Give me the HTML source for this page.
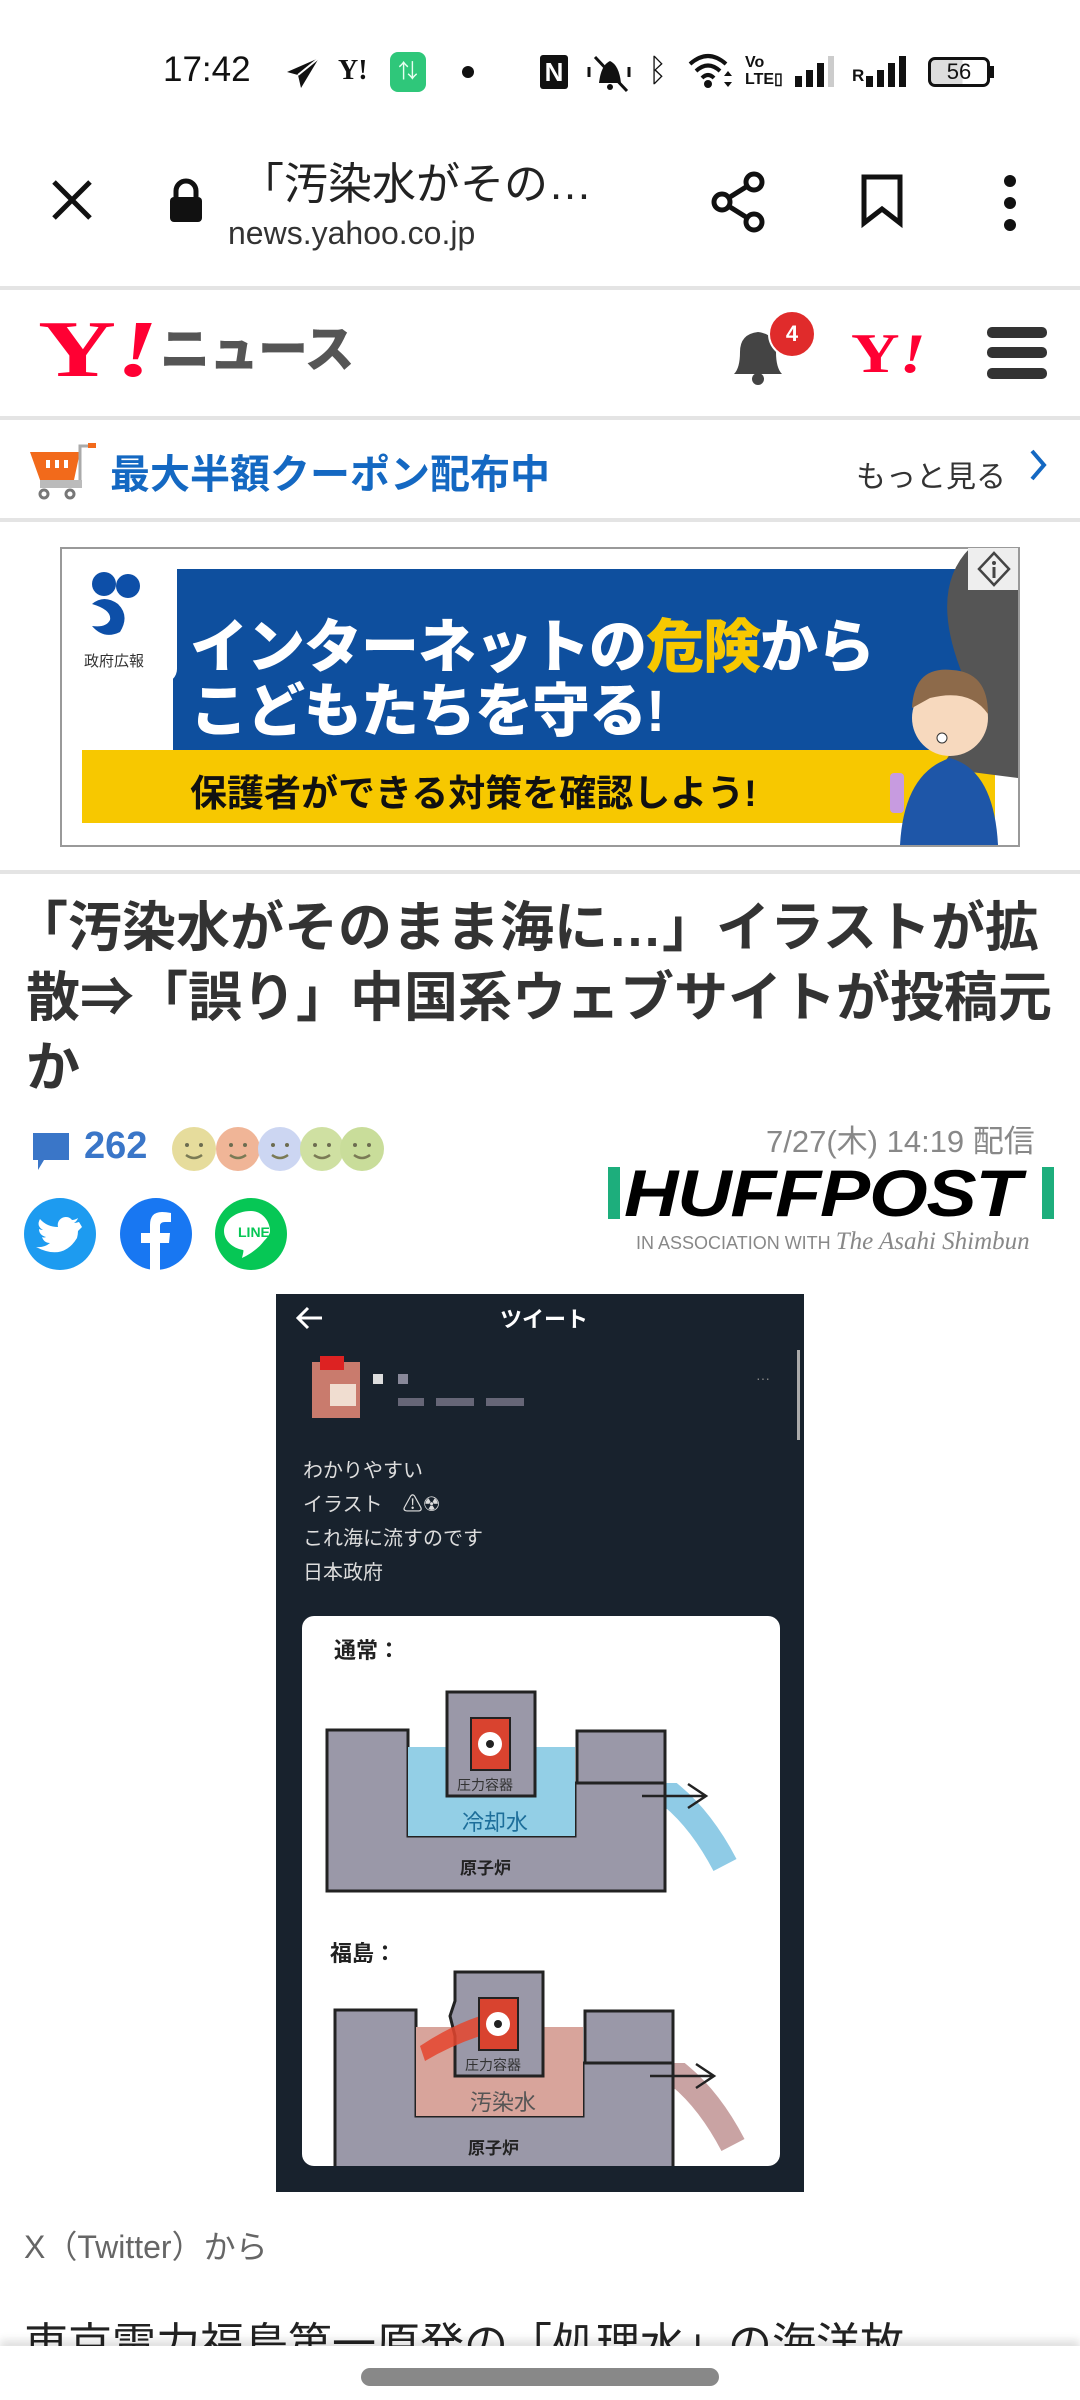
<!DOCTYPE html>
<html><head><meta charset="utf-8">
<style>
*{margin:0;padding:0;box-sizing:border-box}
body{width:1080px;height:2400px;background:#fff;position:relative;overflow:hidden;font-family:"Liberation Sans","Noto Sans CJK JP",sans-serif;color:#222}
.a{position:absolute;white-space:nowrap}
.jp{font-family:"Liberation Sans","Noto Sans CJK JP",sans-serif}
.hr{position:absolute;left:0;width:1080px;height:4px;background:#e4e4e4}
</style></head><body>

<!-- status bar -->
<div class="a" style="left:163px;top:50px;font-size:35px;color:#111">17:42</div>
<svg class="a" style="left:285px;top:56px" width="36" height="34" viewBox="0 0 36 34"><path d="M34 2 L2 16 L13 19 L16 32 Z" fill="#111"/><path d="M13 19 L34 2" stroke="#fff" stroke-width="2"/></svg>
<div class="a" style="left:338px;top:55px;font-size:28px;font-family:'Liberation Serif',serif;font-weight:bold;color:#111">Y!</div>
<div class="a" style="left:390px;top:52px;width:36px;height:40px;border-radius:8px;background:#2fc77a;color:#e8fff0;font-size:20px;text-align:center;line-height:40px">⇅</div>
<div class="a" style="left:462px;top:66px;width:12px;height:12px;border-radius:6px;background:#111"></div>
<div class="a" style="left:540px;top:55px;width:28px;height:34px;background:#111;border-radius:3px;color:#fff;font-size:26px;font-weight:bold;text-align:center;line-height:34px">N</div>
<svg class="a" style="left:585px;top:53px" width="50" height="40" viewBox="0 0 50 40"><path d="M14 30 Q16 12 25 8 Q34 12 36 30 Z" fill="#111"/><circle cx="25" cy="34" r="3" fill="#111"/><path d="M10 4 L42 38" stroke="#111" stroke-width="3"/><path d="M4 14v10M44 14v10" stroke="#111" stroke-width="3"/></svg>
<div class="a" style="left:648px;top:52px;font-size:32px;color:#111">ᛒ</div>
<svg class="a" style="left:688px;top:52px" width="46" height="38" viewBox="0 0 46 38"><path d="M2 12 Q20 -4 38 12" stroke="#111" stroke-width="4" fill="none"/><path d="M8 19 Q20 8 32 19" stroke="#111" stroke-width="4" fill="none"/><path d="M14 26 Q20 20 26 26" stroke="#111" stroke-width="4" fill="none"/><circle cx="20" cy="32" r="4" fill="#111"/><path d="M36 24l4-5 4 5zM36 30l4 5 4-5z" fill="#111"/></svg>
<div class="a" style="left:745px;top:54px;font-size:16px;line-height:17px;font-weight:bold;color:#111">Vo<br>LTE▯</div>
<svg class="a" style="left:795px;top:56px" width="44" height="32"><rect x="0" y="20" width="7" height="11" fill="#111"/><rect x="11" y="14" width="7" height="17" fill="#111"/><rect x="22" y="7" width="7" height="24" fill="#111"/><rect x="33" y="0" width="6" height="31" fill="#ccc"/></svg>
<div class="a" style="left:852px;top:66px;font-size:17px;font-weight:bold;color:#111">R</div>
<svg class="a" style="left:866px;top:56px" width="44" height="32"><rect x="0" y="20" width="7" height="11" fill="#111"/><rect x="11" y="14" width="7" height="17" fill="#111"/><rect x="22" y="7" width="7" height="24" fill="#111"/><rect x="33" y="0" width="7" height="31" fill="#111"/></svg>
<div class="a" style="left:928px;top:57px;width:62px;height:30px;border:3px solid #111;border-radius:7px;font-size:22px;text-align:center;line-height:24px;color:#111;background:linear-gradient(90deg,#ddd 56%,#fff 56%)">56</div>
<div class="a" style="left:990px;top:66px;width:4px;height:12px;background:#111"></div>

<!-- url bar -->
<svg class="a" style="left:50px;top:178px" width="44" height="44"><path d="M4 4L40 40M40 4L4 40" stroke="#111" stroke-width="5"/></svg>
<svg class="a" style="left:168px;top:178px" width="36" height="46"><path d="M8 20V13a10 10 0 0 1 20 0v7" stroke="#111" stroke-width="5" fill="none"/><rect x="2" y="19" width="32" height="25" rx="4" fill="#111"/></svg>
<div class="a jp" style="left:240px;top:148px;font-size:44px;color:#222">「汚染水がその…</div>
<div class="a" style="left:228px;top:215px;font-size:32px;color:#333">news.yahoo.co.jp</div>
<svg class="a" style="left:708px;top:170px" width="60" height="64"><path d="M46 12L14 32L46 52" stroke="#111" stroke-width="5" fill="none"/><circle cx="46" cy="12" r="8" fill="#fff" stroke="#111" stroke-width="5"/><circle cx="14" cy="32" r="8" fill="#fff" stroke="#111" stroke-width="5"/><circle cx="46" cy="52" r="8" fill="#fff" stroke="#111" stroke-width="5"/></svg>
<svg class="a" style="left:860px;top:173px" width="44" height="56"><path d="M4 4H40V50L22 36L4 50Z" stroke="#111" stroke-width="5" fill="none" stroke-linejoin="miter"/></svg>
<svg class="a" style="left:998px;top:175px" width="24" height="56"><circle cx="12" cy="6" r="6" fill="#111"/><circle cx="12" cy="28" r="6" fill="#111"/><circle cx="12" cy="50" r="6" fill="#111"/></svg>
<div class="hr" style="top:286px"></div>

<!-- yahoo header -->
<div class="a" style="left:38px;top:305px;font-size:80px;line-height:90px;font-family:'Liberation Serif',serif;font-weight:bold;color:#ff0033;transform:scaleX(1.35);transform-origin:left">Y<i>!</i></div>
<div class="a jp" style="left:160px;top:318px;font-size:50px;line-height:64px;font-weight:900;color:#555;letter-spacing:-1px">ニュース</div>
<svg class="a" style="left:728px;top:322px" width="62" height="64"><path d="M6 52Q12 46 12 30Q12 12 30 10Q48 12 48 30Q48 46 54 52Z" fill="#444"/><circle cx="30" cy="57" r="6" fill="#444"/></svg>
<div class="a" style="left:768px;top:310px;width:48px;height:48px;border-radius:24px;background:#e02b2b;color:#fff;font-size:22px;font-weight:bold;text-align:center;line-height:44px;border:2px solid #fff">4</div>
<div class="a" style="left:851px;top:322px;font-size:56px;line-height:64px;font-family:'Liberation Serif',serif;font-weight:bold;color:#ff0033;transform:scaleX(1.2);transform-origin:left">Y<i>!</i></div>
<div class="a" style="left:987px;top:327px;width:60px;height:11px;background:#333;border-radius:5px"></div>
<div class="a" style="left:987px;top:347px;width:60px;height:11px;background:#333;border-radius:5px"></div>
<div class="a" style="left:987px;top:368px;width:60px;height:11px;background:#333;border-radius:5px"></div>
<div class="hr" style="top:416px"></div>

<!-- coupon -->
<svg class="a" style="left:28px;top:440px" width="70" height="62"><path d="M2 12H52L46 40H12Z" fill="#f26a1b"/><rect x="18" y="20" width="4" height="8" fill="#fff"/><rect x="27" y="20" width="4" height="8" fill="#fff"/><rect x="36" y="20" width="4" height="8" fill="#fff"/><path d="M52 40V6H66" stroke="#aaa" stroke-width="3" fill="none"/><rect x="60" y="3" width="8" height="5" fill="#f26a1b"/><rect x="12" y="40" width="42" height="8" fill="#bbb"/><circle cx="16" cy="54" r="4" fill="none" stroke="#777" stroke-width="3"/><circle cx="42" cy="54" r="4" fill="none" stroke="#777" stroke-width="3"/></svg>
<div class="a jp" style="left:110px;top:442px;font-size:40px;font-weight:bold;color:#1468c2">最大半額クーポン配布中</div>
<div class="a jp" style="left:856px;top:452px;font-size:30px;color:#333">もっと見る</div>
<svg class="a" style="left:1028px;top:448px" width="22" height="34"><path d="M4 3L16 17L4 31" stroke="#1468c2" stroke-width="4" fill="none"/></svg>
<div class="hr" style="top:518px"></div>

<!-- banner -->
<div class="a" style="left:60px;top:547px;width:960px;height:300px;border:2px solid #999;background:#fff"></div>
<div class="a" style="left:173px;top:569px;width:822px;height:182px;background:#0e4f9e"></div>
<div class="a" style="left:82px;top:750px;width:913px;height:73px;background:#f7c800"></div>
<div class="a" style="left:82px;top:569px;width:95px;height:114px;background:#fff;border-radius:0 0 14px 0"></div>
<svg class="a" style="left:84px;top:570px" width="60" height="70"><circle cx="20" cy="14" r="12" fill="#0d4fa8"/><circle cx="44" cy="16" r="12" fill="#0d4fa8"/><path d="M8 34Q20 24 34 34Q46 46 36 62Q20 70 8 56Q22 58 26 50Q28 40 8 34Z" fill="#0d4fa8"/></svg>
<div class="a jp" style="left:84px;top:650px;font-size:15px;color:#333">政府広報</div>
<div class="a jp" style="left:190px;top:600px;font-size:58px;font-weight:900;color:#fff;letter-spacing:-1px">インターネットの<span style="color:#f7c800">危険</span>から</div>
<div class="a jp" style="left:190px;top:664px;font-size:58px;font-weight:900;color:#fff;letter-spacing:-1px">こどもたちを守る!</div>
<div class="a jp" style="left:190px;top:763px;font-size:37px;font-weight:bold;color:#111">保護者ができる対策を確認しよう!</div>
<svg class="a" style="left:870px;top:548px" width="148" height="297"><path d="M100 0Q60 40 90 120Q110 170 70 220L148 230V0Z" fill="#555"/><circle cx="80" cy="170" r="38" fill="#f7d9be"/><path d="M42 160Q44 118 82 122Q118 124 118 166Q100 140 60 150Z" fill="#8d6a4a"/><path d="M30 297Q34 225 80 210Q124 222 128 297Z" fill="#1e56a8"/><rect x="20" y="225" width="14" height="40" rx="4" fill="#c79be0"/><circle cx="72" cy="190" r="5" fill="#fff" stroke="#333"/></svg>
<div class="a" style="left:968px;top:548px;width:50px;height:42px;background:#eee"></div>
<svg class="a" style="left:977px;top:551px" width="34" height="36"><path d="M17 2L32 18L17 34L2 18Z" fill="none" stroke="#444" stroke-width="2.5"/><circle cx="17" cy="12" r="2" fill="#444"/><path d="M17 16v11" stroke="#444" stroke-width="3"/></svg>
<div class="hr" style="top:870px"></div>

<!-- headline -->
<div class="a jp" style="left:14px;top:893px;font-size:54px;font-weight:bold;color:#333;line-height:70px">「汚染水がそのまま海に…」イラストが拡<br><span style="margin-left:12px">散⇒「誤り」中国系ウェブサイトが投稿元</span><br><span style="margin-left:12px">か</span></div>

<!-- meta -->
<svg class="a" style="left:30px;top:1130px" width="42" height="44"><path d="M3 3H39V30H14L8 40V30H3Z" fill="#3a76c8"/></svg>
<div class="a" style="left:84px;top:1125px;font-size:38px;font-weight:bold;color:#3a76c8">262</div>
<svg class="a" style="left:168px;top:1124px" width="222" height="50">
<g><circle cx="26" cy="25" r="22" fill="#e6dc9c"/><circle cx="70" cy="25" r="22" fill="#f0b597"/><circle cx="112" cy="25" r="22" fill="#ccd6f2"/><circle cx="154" cy="25" r="22" fill="#cfe0a2"/><circle cx="194" cy="25" r="22" fill="#c9dd9a"/></g>
<g fill="#6c6c50"><circle cx="19" cy="21" r="2"/><circle cx="33" cy="21" r="2"/><circle cx="63" cy="21" r="2"/><circle cx="77" cy="21" r="2"/><circle cx="105" cy="21" r="2"/><circle cx="119" cy="21" r="2"/><circle cx="147" cy="21" r="2"/><circle cx="161" cy="21" r="2"/><circle cx="187" cy="21" r="2"/><circle cx="201" cy="21" r="2"/></g>
<g stroke="#7a7a55" stroke-width="2.5" fill="none"><path d="M18 31q8 6 16 0M62 31q8 6 16 0M104 31q8 6 16 0M146 31q8 6 16 0M186 31q8 6 16 0"/></g></svg>
<div class="a jp" style="left:766px;top:1116px;font-size:31px;color:#888">7/27(木) 14:19 配信</div>

<div class="a" style="left:608px;top:1167px;width:12px;height:52px;background:#1dae7c"></div>
<div class="a" style="left:1042px;top:1167px;width:12px;height:52px;background:#1dae7c"></div>
<div class="a" style="left:624px;top:1156px;font-size:66px;line-height:74px;font-weight:900;font-style:italic;color:#000;letter-spacing:-1px;transform:scaleX(1.14);transform-origin:left">HUFFPOST</div>
<div class="a" style="left:636px;top:1228px;font-size:18px;color:#888">IN ASSOCIATION WITH <span style="font-family:'Liberation Serif',serif;font-size:25px;font-style:italic">The Asahi Shimbun</span></div>

<!-- social -->
<svg class="a" style="left:23px;top:1197px" width="74" height="74"><circle cx="37" cy="37" r="36" fill="#1d9bf0"/><path d="M56 25q-3 1-5 1 3-2 4-5-3 2-6 2a8 8 0 0 0-14 7q-11 0-18-8-4 7 3 11-2 0-4-1 0 6 7 8-2 1-4 0 2 6 8 6-6 5-14 4 27 14 41-9 1-4 1-7 2-2 4-4z" fill="#fff"/></svg>
<svg class="a" style="left:119px;top:1197px" width="74" height="74"><circle cx="37" cy="37" r="36" fill="#1877f2"/><path d="M41 74V46h9l1-10H41v-7q0-4 5-4h6v-9q-5-1-9-1-12 0-12 13v8h-9v10h9v28z" fill="#fff"/></svg>
<svg class="a" style="left:214px;top:1197px" width="74" height="74"><circle cx="37" cy="37" r="36" fill="#06c755"/><path d="M37 14C22 14 10 23 10 34c0 9 8 17 19 19 1 0 0 4-1 8 7-3 17-10 22-17 4-4 6-7 6-10 0-11-9-20-19-20z" fill="#fff"/><text x="24" y="40" font-size="14" font-weight="bold" fill="#06c755" font-family="Liberation Sans">LINE</text></svg>

<!-- tweet image -->
<div class="a" style="left:276px;top:1294px;width:528px;height:898px;background:#18222d;overflow:hidden">
  <svg class="a" style="left:18px;top:12px" width="30" height="24"><path d="M28 12H4M14 2L4 12L14 22" stroke="#fff" stroke-width="3" fill="none"/></svg>
  <div class="a jp" style="left:224px;top:8px;font-size:22px;font-weight:bold;color:#fff">ツイート</div>
  <div class="a" style="left:521px;top:56px;width:3px;height:90px;background:#aaa"></div>
  <div class="a" style="left:36px;top:68px;width:48px;height:56px;background:#c97b6d"></div>
  <div class="a" style="left:44px;top:62px;width:24px;height:14px;background:#d22"></div>
  <div class="a" style="left:54px;top:90px;width:26px;height:22px;background:#f0ddd0"></div>
  <div class="a" style="left:97px;top:80px;width:10px;height:10px;background:#ddd"></div>
  <div class="a" style="left:122px;top:80px;width:10px;height:10px;background:#889"></div>
  <div class="a" style="left:122px;top:104px;width:26px;height:8px;background:#667"></div>
  <div class="a" style="left:160px;top:104px;width:38px;height:8px;background:#667"></div>
  <div class="a" style="left:210px;top:104px;width:38px;height:8px;background:#667"></div>
  <div class="a" style="left:480px;top:76px;font-size:14px;color:#888">···</div>
  <div class="a jp" style="left:27px;top:160px;font-size:20px;color:#ddd;line-height:34px">わかりやすい<br>イラスト　⚠☢<br>これ海に流すのです<br>日本政府</div>
  <div class="a" style="left:26px;top:322px;width:478px;height:550px;background:#fff;border-radius:12px">
   <svg width="478" height="550" viewBox="0 0 478 550">
    <text x="32" y="42" font-size="22" font-weight="bold" font-family="Noto Sans CJK JP" fill="#222">通常：</text>
    <g>
     <path d="M423 249Q400 205 370 180H273V167" stroke="#8fcbe6" stroke-width="26" fill="none"/>
     <path d="M25 114H106V220H273V167H363V275H25Z" fill="#9a98a8" stroke="#222" stroke-width="3"/>
     <rect x="106" y="131" width="167" height="89" fill="#93cfe6"/>
     <rect x="275" y="115" width="88" height="52" fill="#9a98a8" stroke="#222" stroke-width="3"/>
     <rect x="145" y="76" width="88" height="104" fill="#9a98a8" stroke="#222" stroke-width="3"/>
     <rect x="169" y="102" width="39" height="52" fill="#d9432f" stroke="#222" stroke-width="2"/>
     <circle cx="188" cy="128" r="12" fill="#fff"/><circle cx="188" cy="128" r="4" fill="#222"/>
     <text x="155" y="174" font-size="14" font-family="Noto Sans CJK JP" fill="#333">圧力容器</text>
     <text x="160" y="214" font-size="22" font-family="Noto Sans CJK JP" fill="#1d6e9a">冷却水</text>
     <text x="158" y="258" font-size="17" font-weight="bold" font-family="Noto Sans CJK JP" fill="#222">原子炉</text>
     <path d="M340 180H402M386 168L404 180L386 192" stroke="#222" stroke-width="2.5" fill="none"/>
    </g>
    <text x="28" y="345" font-size="22" font-weight="bold" font-family="Noto Sans CJK JP" fill="#222">福島：</text>
    <g transform="translate(8,280)">
     <path d="M423 249Q400 205 370 180H273V167" stroke="#c9a3a3" stroke-width="26" fill="none"/>
     <path d="M25 114H106V220H273V167H363V275H25Z" fill="#9a98a8" stroke="#222" stroke-width="3"/>
     <rect x="106" y="131" width="167" height="89" fill="#d8a49b"/>
     <rect x="275" y="115" width="88" height="52" fill="#9a98a8" stroke="#222" stroke-width="3"/>
     <path d="M145 76H233V180H145V140L140 120L145 105Z" fill="#9a98a8" stroke="#222" stroke-width="3"/>
     <path d="M110 150Q140 130 170 120L170 140Q140 150 115 165Z" fill="#e5452e" opacity="0.85"/>
     <rect x="169" y="102" width="39" height="52" fill="#d9432f" stroke="#222" stroke-width="2"/>
     <circle cx="188" cy="128" r="12" fill="#fff"/><circle cx="188" cy="128" r="4" fill="#222"/>
     <text x="155" y="174" font-size="14" font-family="Noto Sans CJK JP" fill="#333">圧力容器</text>
     <text x="160" y="214" font-size="22" font-family="Noto Sans CJK JP" fill="#555">汚染水</text>
     <text x="158" y="258" font-size="17" font-weight="bold" font-family="Noto Sans CJK JP" fill="#222">原子炉</text>
     <path d="M340 180H402M386 168L404 180L386 192" stroke="#222" stroke-width="2.5" fill="none"/>
    </g>
   </svg>
  </div>
</div>

<div class="a jp" style="left:24px;top:2222px;font-size:32px;color:#666">X（Twitter）から</div>
<div class="a jp" style="left:24px;top:2308px;font-size:44px;color:#222">東京電力福島第一原発の「処理水」の海洋放</div>

<!-- bottom nav -->
<div class="a" style="left:0;top:2346px;width:1080px;height:54px;background:#fff;box-shadow:0 -6px 8px rgba(0,0,0,0.12)"></div>
<div class="a" style="left:361px;top:2368px;width:358px;height:18px;border-radius:9px;background:#888"></div>
</body></html>
